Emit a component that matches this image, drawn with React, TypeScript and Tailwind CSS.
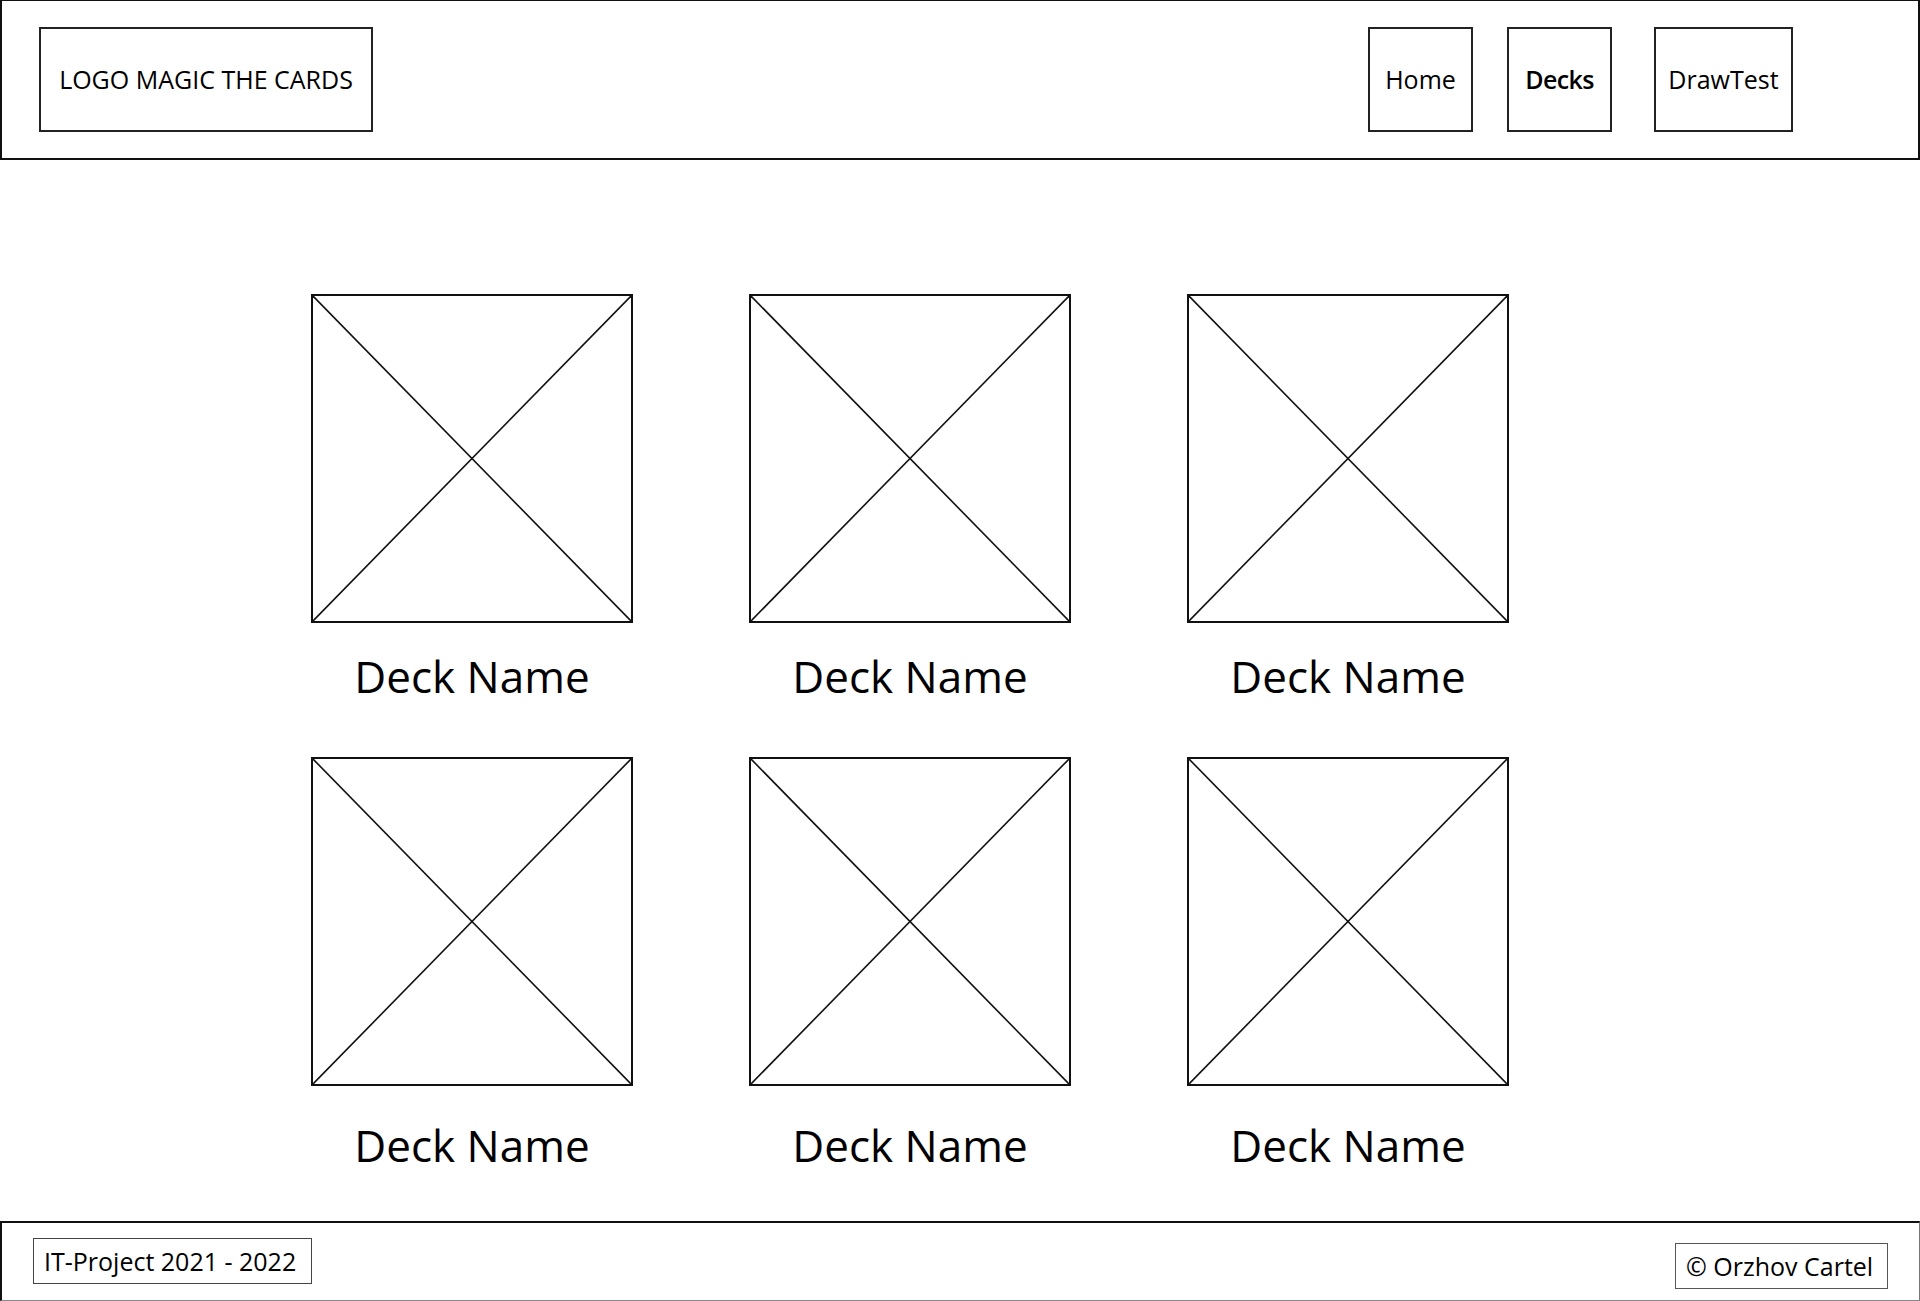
/**
 * Decks overview wireframe
 * Header with logo + nav, 2x3 deck grid, footer
 */

const NAV = [
  { label: 'Home', width: 'w-[105px]', gap: 'ml-0', bold: false },
  { label: 'Decks', width: 'w-[105px]', gap: 'ml-[34px]', bold: true },
  { label: 'DrawTest', width: 'w-[139px]', gap: 'ml-[42px]', bold: false },
];

function Placeholder() {
  return (
    <div className="relative w-[322px] h-[329px] border-2 border-[#111]">
      <svg
        className="absolute inset-0 w-full h-full"
        viewBox="0 0 100 100"
        preserveAspectRatio="none"
      >
        <line x1="0" y1="0" x2="100" y2="100" stroke="#111" strokeWidth="1.6" vectorEffect="non-scaling-stroke" />
        <line x1="100" y1="0" x2="0" y2="100" stroke="#111" strokeWidth="1.6" vectorEffect="non-scaling-stroke" />
      </svg>
    </div>
  );
}

function DeckCard({ textGap }: { textGap: string }) {
  return (
    <div className="flex flex-col items-center w-[322px]">
      <Placeholder />
      <p className={`${textGap} text-[44px] leading-none text-black`}>Deck Name</p>
    </div>
  );
}

export default function App() {
  return (
    <div
      className="w-[1920px] h-[1301px] flex flex-col bg-white text-black"
      style={{ fontFamily: '"Open Sans", "Noto Sans", sans-serif' }}
    >
      {/* Header */}
      <header className="h-[160px] shrink-0 flex items-start border-t border-l-2 border-r-2 border-b-2 border-[#111] pl-[37px] pr-[125px] pt-[26px]">
        <div className="w-[334px] h-[105px] border-2 border-[#222] flex items-center justify-center">
          <span className="text-[25px] leading-none">LOGO MAGIC THE CARDS</span>
        </div>

        <nav className="ml-auto flex items-start">
          {NAV.map((item) => (
            <div
              key={item.label}
              className={`${item.width} ${item.gap} h-[105px] border-2 border-[#222] flex items-center justify-center`}
            >
              <span className={`text-[25px] leading-none ${item.bold ? 'font-semibold tracking-tight' : ''}`}>
                {item.label}
              </span>
            </div>
          ))}
        </nav>
      </header>

      {/* Deck grid */}
      <main className="flex-1 flex flex-col pt-[134px] pl-[311px]">
        <div className="flex gap-[116px]">
          {[0, 1, 2].map((i) => (
            <DeckCard key={i} textGap="mt-[31px]" />
          ))}
        </div>
        <div className="flex gap-[116px] mt-[59px]">
          {[0, 1, 2].map((i) => (
            <DeckCard key={i} textGap="mt-[37px]" />
          ))}
        </div>
      </main>

      {/* Footer */}
      <footer className="h-[80px] shrink-0 flex items-start justify-between border-t-2 border-l-2 border-r border-b border-t-[#111] border-l-[#111] border-r-[#777] border-b-[#888] pl-[31px] pr-[31px]">
        <div className="mt-[15px] w-[279px] h-[46px] border border-[#444] flex items-center pl-[10px]">
          <span className="text-[25px] leading-none">IT-Project 2021 - 2022</span>
        </div>
        <div className="mt-[20px] w-[213px] h-[46px] border border-[#555] flex items-center pl-[10px]">
          <span className="text-[25px] leading-none">© Orzhov Cartel</span>
        </div>
      </footer>
    </div>
  );
}
